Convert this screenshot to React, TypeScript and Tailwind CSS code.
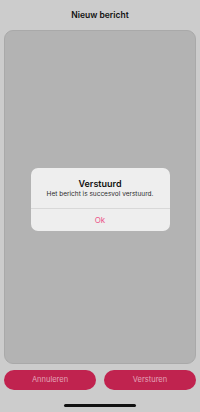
export default function App() {
  return (
    <div
      className="relative flex h-[412px] w-[200px] flex-col bg-[#cccccc] text-[#1a1a1a]"
      style={{ fontFamily: "Inter, 'Liberation Sans', sans-serif" }}
    >
      <div className="flex h-[30px] items-center justify-center pt-[1px] text-[8.5px] font-semibold text-[#111]">
        Nieuw bericht
      </div>
      <div className="mx-[4px] flex h-[334px] items-center justify-center rounded-[9px] border border-[#a9a9a9] bg-[#b3b3b3]">
        <div className="mt-[5px] w-[139px] rounded-[7px] bg-[#eeeeee] text-center">
          <div className="px-2 pt-[10px] pb-[9px]">
            <div className="text-[9px] font-semibold leading-[11px] text-[#111]">Verstuurd</div>
            <div className="mt-[1px] text-[6.5px] leading-[9px] text-[#2a2a2a]">
              Het bericht is succesvol verstuurd.
            </div>
          </div>
          <div className="flex h-[23px] items-center justify-center border-t border-[#d8d8d8] text-[8px] text-[#ec5489]">
            Ok
          </div>
        </div>
      </div>
      <div className="mx-[4px] mt-[6px] flex gap-[8px]">
        <button className="h-[20px] flex-1 rounded-full bg-[#c0234f] text-[7.5px] text-[#e3a3b8]">
          Annuleren
        </button>
        <button className="h-[20px] flex-1 rounded-full bg-[#c0234f] text-[7.5px] text-[#e3a3b8]">
          Versturen
        </button>
      </div>
      <div className="mt-[14px] flex justify-center">
        <div className="h-[3px] w-[72px] rounded-full bg-[#111]" />
      </div>
    </div>
  );
}
